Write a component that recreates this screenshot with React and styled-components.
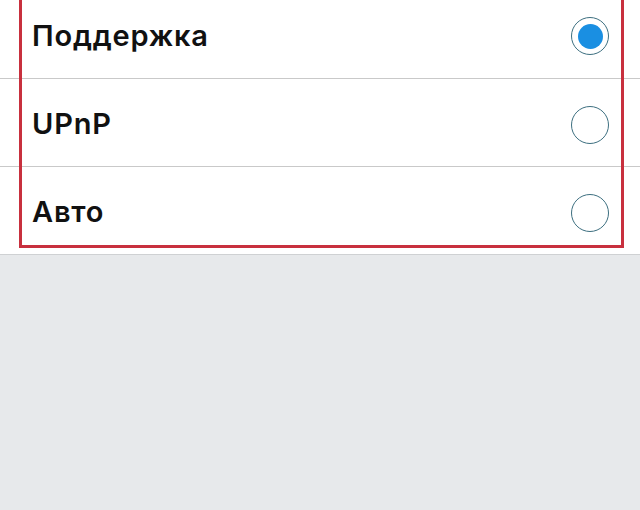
import React from "react";
import styled, { createGlobalStyle } from "styled-components";

const Global = createGlobalStyle`
  html, body { margin: 0; padding: 0; }
  body { background: #e7e9eb; font-family: "Inter", "Roboto", "Liberation Sans", sans-serif; overflow: hidden; }
`;

const Page = styled.div`
  width: 640px;
  height: 510px;
  background: #e7e9eb;
  position: relative;
  overflow: hidden;
`;

const List = styled.div`
  position: relative;
  margin-top: -10px;
  background: #ffffff;
  border-bottom: 1px solid #cfd1d3;
`;

const Row = styled.div`
  height: 88px;
  box-sizing: border-box;
  display: flex;
  align-items: center;
  justify-content: space-between;
  padding: 0 31px 0 32px;
  border-top: ${(p) => (p.$first ? "none" : "1px solid #c9c9c9")};
`;

const Label = styled.span`
  font-size: 29px;
  font-weight: 600;
  color: #111111;
  letter-spacing: 0.8px;
  margin-top: 2px;
`;

const Radio = styled.span`
  width: 38px;
  height: 38px;
  box-sizing: border-box;
  border-radius: 50%;
  border: 1.6px solid #3d6f80;
  display: flex;
  align-items: center;
  justify-content: center;
  margin-top: 4px;
`;

const Dot = styled.span`
  width: 25px;
  height: 25px;
  border-radius: 50%;
  background: #1a8fe2;
`;

const Highlight = styled.div`
  position: absolute;
  left: 19px;
  right: 16px;
  top: -10px;
  bottom: 6px;
  border: 3px solid #c8303e;
  pointer-events: none;
`;

const items = [
  { label: "Поддержка", selected: true },
  { label: "UPnP", selected: false },
  { label: "Авто", selected: false },
];

export default function App() {
  return (
    <Page>
      <Global />
      <List>
        {items.map((it, i) => (
          <Row key={it.label} $first={i === 0}>
            <Label>{it.label}</Label>
            <Radio>{it.selected && <Dot />}</Radio>
          </Row>
        ))}
        <Highlight />
      </List>
    </Page>
  );
}
